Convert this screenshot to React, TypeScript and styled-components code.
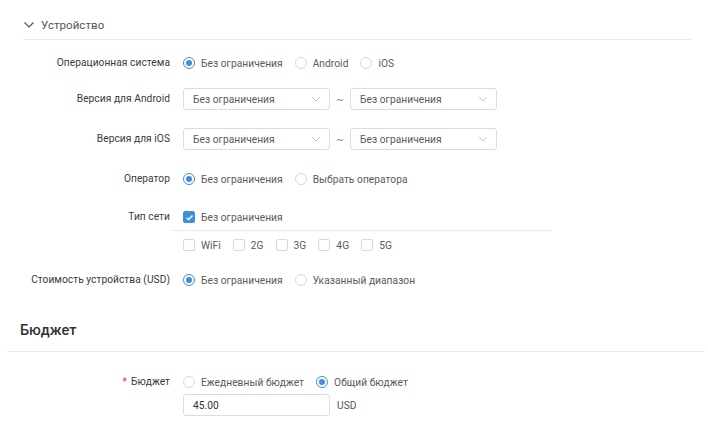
import React from "react";
import styled, { createGlobalStyle } from "styled-components";

const Global = createGlobalStyle`
  html, body { margin: 0; padding: 0; background: #fff; }
  body { font-family: Roboto, "Noto Sans", "DejaVu Sans", sans-serif; font-size: 10.2px; letter-spacing: 0.05px; color: #333; }
  * { box-sizing: border-box; }
`;

const Page = styled.div`
  width: 708px;
  height: 437px;
  overflow: hidden;
  padding-top: 16px;
`;

const SectionHeader = styled.div`
  display: flex;
  align-items: center;
  gap: 6px;
  height: 18px;
  padding-left: 23px;
  font-size: 11.5px;
  color: #555;
`;

const Divider = styled.div<{ $ml: number; $mr: number; $mt?: number }>`
  height: 1px;
  background: #ebebeb;
  margin-left: ${(p) => p.$ml}px;
  margin-right: ${(p) => p.$mr}px;
  margin-top: ${(p) => p.$mt ?? 0}px;
`;

const Form = styled.div<{ $mt: number }>`
  display: flex;
  flex-direction: column;
  margin-top: ${(p) => p.$mt}px;
`;

const Item = styled.div<{ $mb?: number }>`
  display: grid;
  grid-template-columns: 170px 1fr;
  column-gap: 13px;
  align-items: start;
  margin-bottom: ${(p) => p.$mb ?? 0}px;
`;

const Label = styled.div`
  height: 22px;
  line-height: 22px;
  text-align: right;
  color: #3a3a3a;
  white-space: nowrap;
`;

const Star = styled.span`
  color: #e5383b;
  margin-right: 4px;
  font-size: 10px;
`;

const Controls = styled.div<{ $gap?: number }>`
  display: flex;
  flex-direction: column;
  gap: ${(p) => p.$gap ?? 0}px;
`;

const Line = styled.div`
  display: flex;
  align-items: center;
  height: 22px;
`;

const Option = styled.label`
  display: flex;
  align-items: center;
  gap: 6px;
  margin-right: 12px;
  color: #5a5a5a;
  white-space: nowrap;
`;

const RadioCircle = styled.span<{ $on?: boolean }>`
  width: 12px;
  height: 12px;
  border-radius: 50%;
  border: 1px solid ${(p) => (p.$on ? "#3f8fd8" : "#d9d9d9")};
  display: inline-flex;
  align-items: center;
  justify-content: center;
  background: #fff;
  &::after {
    content: "";
    width: 6px;
    height: 6px;
    border-radius: 50%;
    background: ${(p) => (p.$on ? "#3f8fd8" : "transparent")};
  }
`;

const Box = styled.span<{ $on?: boolean }>`
  width: 12px;
  height: 12px;
  border-radius: 2px;
  border: 1px solid ${(p) => (p.$on ? "#3f8fd8" : "#d9d9d9")};
  background: ${(p) => (p.$on ? "#3f8fd8" : "#fff")};
  display: inline-flex;
  align-items: center;
  justify-content: center;
`;

const CheckOption = styled(Option)`
  margin-right: 12px;
`;

const NetDivider = styled.div`
  height: 1px;
  background: #ebebeb;
  margin: 2px 0 3px -12px;
  width: 381px;
`;

const SelectBox = styled.div`
  width: 147px;
  height: 22px;
  border: 1px solid #dcdcdc;
  border-radius: 3px;
  display: flex;
  align-items: center;
  justify-content: space-between;
  padding: 0 8px 0 9px;
  color: #5a5a5a;
  background: #fff;
`;

const Tilde = styled.span`
  width: 20px;
  text-align: center;
  color: #777;
`;

const Input = styled.div`
  width: 147px;
  height: 22px;
  border: 1px solid #dcdcdc;
  border-radius: 3px;
  display: flex;
  align-items: center;
  padding-left: 9px;
  color: #333;
`;

const Unit = styled.span`
  margin-left: 7px;
  color: #555;
`;

const BudgetTitle = styled.div`
  margin-top: 29px;
  padding-left: 20px;
  font-size: 14.5px;
  font-weight: 500;
  color: #333;
  height: 22px;
  line-height: 22px;
`;

const Chevron = () => (
  <svg width="12" height="12" viewBox="0 0 12 12">
    <path d="M1.5 3.5 L6 8 L10.5 3.5" fill="none" stroke="#555" strokeWidth="1.2" />
  </svg>
);

const SmallChevron = () => (
  <svg width="10" height="10" viewBox="0 0 10 10">
    <path d="M1 3 L5 7 L9 3" fill="none" stroke="#c4c4c4" strokeWidth="1" />
  </svg>
);

const Tick = () => (
  <svg width="9" height="9" viewBox="0 0 10 10">
    <path d="M1.8 5.2 L4 7.3 L8.3 2.8" fill="none" stroke="#fff" strokeWidth="1.6" />
  </svg>
);

const Radio = ({ on, children }: { on?: boolean; children: React.ReactNode }) => (
  <Option>
    <RadioCircle $on={on} />
    {children}
  </Option>
);

const Check = ({ on, children }: { on?: boolean; children: React.ReactNode }) => (
  <CheckOption>
    <Box $on={on}>{on && <Tick />}</Box>
    {children}
  </CheckOption>
);

const Select = () => (
  <SelectBox>
    <span>Без ограничения</span>
    <SmallChevron />
  </SelectBox>
);

export default function App() {
  return (
    <Page>
      <Global />
      <SectionHeader>
        <Chevron />
        <span>Устройство</span>
      </SectionHeader>
      <Divider $ml={23} $mr={17} $mt={5} />
      <Form $mt={12}>
        <Item $mb={14}>
          <Label>Операционная система</Label>
          <Line>
            <Radio on>Без ограничения</Radio>
            <Radio>Android</Radio>
            <Radio>iOS</Radio>
          </Line>
        </Item>
        <Item $mb={18}>
          <Label>Версия для Android</Label>
          <Line>
            <Select />
            <Tilde>~</Tilde>
            <Select />
          </Line>
        </Item>
        <Item $mb={18}>
          <Label>Версия для iOS</Label>
          <Line>
            <Select />
            <Tilde>~</Tilde>
            <Select />
          </Line>
        </Item>
        <Item $mb={16}>
          <Label>Оператор</Label>
          <Line>
            <Radio on>Без ограничения</Radio>
            <Radio>Выбрать оператора</Radio>
          </Line>
        </Item>
        <Item $mb={13}>
          <Label>Тип сети</Label>
          <Controls>
            <Line>
              <Check on>Без ограничения</Check>
            </Line>
            <NetDivider />
            <Line>
              <Check>WiFi</Check>
              <Check>2G</Check>
              <Check>3G</Check>
              <Check>4G</Check>
              <Check>5G</Check>
            </Line>
          </Controls>
        </Item>
        <Item>
          <Label>Стоимость устройства (USD)</Label>
          <Line>
            <Radio on>Без ограничения</Radio>
            <Radio>Указанный диапазон</Radio>
          </Line>
        </Item>
      </Form>
      <BudgetTitle>Бюджет</BudgetTitle>
      <Divider $ml={7} $mr={3} $mt={9} />
      <Form $mt={19}>
        <Item>
          <Label>
            <Star>*</Star>Бюджет
          </Label>
          <Controls $gap={1}>
            <Line>
              <Radio>Ежедневный бюджет</Radio>
              <Radio on>Общий бюджет</Radio>
            </Line>
            <Line>
              <Input>45.00</Input>
              <Unit>USD</Unit>
            </Line>
          </Controls>
        </Item>
      </Form>
    </Page>
  );
}
